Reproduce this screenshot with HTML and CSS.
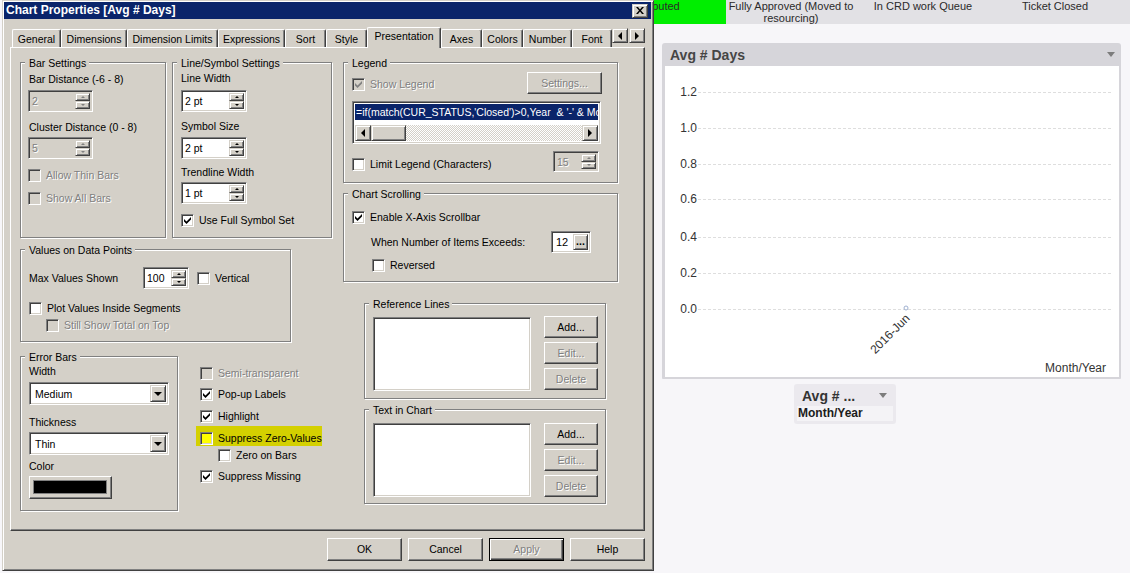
FILE: index.html
```html
<!DOCTYPE html>
<html lang="en">
<head>
    <meta charset="UTF-8">
    <meta name="viewport" content="width=device-width, initial-scale=1.0">
    <title>Chart Properties [Avg # Days]</title>
    <link rel="stylesheet" href="styles.css">
</head>
<body>
    <!-- sheet behind the dialog -->
    <div class="app">
        <div class="strip">
            <div class="strip-cell done">Disputed</div>
            <div class="strip-cell">Fully Approved (Moved to resourcing)</div>
            <div class="strip-cell">In CRD work Queue</div>
            <div class="strip-cell">Ticket Closed</div>
        </div>

        <div class="chart-box">
            <div class="chart-head"><span>Avg # Days</span><i class="menu-arrow"></i></div>
            <div class="chart-body">
                <svg class="plot" width="454" height="311" viewBox="0 0 454 311">
                    <g class="grid">
                        <line x1="33" y1="26.5" x2="446" y2="26.5"/>
                        <line x1="33" y1="62.5" x2="446" y2="62.5"/>
                        <line x1="33" y1="98.5" x2="446" y2="98.5"/>
                        <line x1="33" y1="133.5" x2="446" y2="133.5"/>
                        <line x1="33" y1="171.5" x2="446" y2="171.5"/>
                        <line x1="33" y1="207.5" x2="446" y2="207.5"/>
                        <line x1="33" y1="243.5" x2="446" y2="243.5"/>
                    </g>
                    <g class="ticks">
                        <text x="32" y="30">1.2</text>
                        <text x="32" y="66">1.0</text>
                        <text x="32" y="102">0.8</text>
                        <text x="32" y="137">0.6</text>
                        <text x="32" y="175">0.4</text>
                        <text x="32" y="211">0.2</text>
                        <text x="32" y="247">0.0</text>
                    </g>
                    <circle class="point" cx="241" cy="242" r="2"/>
                    <text class="dim-label" transform="translate(225 268) rotate(-45)" x="0" y="4">2016-Jun</text>
                    <text class="axis-title" x="441" y="306">Month/Year</text>
                </svg>
            </div>
        </div>

        <div class="mini-legend">
            <div class="mini-head"><span>Avg # ...</span><i class="menu-arrow"></i></div>
            <div class="mini-row">Month/Year</div>
        </div>
    </div>

    <!-- Chart Properties dialog -->
    <div class="dialog">
        <div class="titlebar">
            <span>Chart Properties [Avg # Days]</span>
            <span class="close raised">
                <svg width="8" height="7" viewBox="0 0 8 7"><path d="M0 0h2l2 2.4L6 0h2L5 3.5 8 7H6L4 4.6 2 7H0l3-3.5z"/></svg>
            </span>
        </div>

        <div class="dialog-body">
            <div class="tabs">
                <div class="tab t-general">General</div>
                <div class="tab t-dims">Dimensions</div>
                <div class="tab t-limits">Dimension Limits</div>
                <div class="tab t-expr">Expressions</div>
                <div class="tab t-sort">Sort</div>
                <div class="tab t-style">Style</div>
                <div class="tab active t-pres">Presentation</div>
                <div class="tab t-axes">Axes</div>
                <div class="tab t-colors">Colors</div>
                <div class="tab t-number">Number</div>
                <div class="tab t-font">Font</div>
                <div class="tab-arrows">
                    <span class="raised arrow-btn"><i class="tri-left"></i></span>
                    <span class="raised arrow-btn"><i class="tri-right"></i></span>
                </div>
            </div>

            <div class="panel">
                <div class="col-left">
                    <div class="row">
                        <div class="group bar-settings">
                            <div class="group-title">Bar Settings</div>
                            <div class="lbl mt3">Bar Distance (-6 - 8)</div>
                            <div class="spin field off w65 mt4 nudge">
                                <span class="spin-text">2</span>
                                <span class="spin-btns"><span class="raised"><i class="tri-up"></i></span><span class="raised"><i class="tri-down"></i></span></span>
                            </div>
                            <div class="lbl mt9">Cluster Distance (0 - 8)</div>
                            <div class="spin field off w65 mt3 nudge">
                                <span class="spin-text">5</span>
                                <span class="spin-btns"><span class="raised"><i class="tri-up"></i></span><span class="raised"><i class="tri-down"></i></span></span>
                            </div>
                            <div class="check off mt10 nudge"><span class="box"></span>Allow Thin Bars</div>
                            <div class="check off mt10 nudge"><span class="box"></span>Show All Bars</div>
                        </div>

                        <div class="group line-settings">
                            <div class="group-title">Line/Symbol Settings</div>
                            <div class="lbl mt2">Line Width</div>
                            <div class="spin field w66 mt5">
                                <span class="spin-text">2 pt</span>
                                <span class="spin-btns"><span class="raised"><i class="tri-up"></i></span><span class="raised"><i class="tri-down"></i></span></span>
                            </div>
                            <div class="lbl mt8">Symbol Size</div>
                            <div class="spin field w66 mt4">
                                <span class="spin-text">2 pt</span>
                                <span class="spin-btns"><span class="raised"><i class="tri-up"></i></span><span class="raised"><i class="tri-down"></i></span></span>
                            </div>
                            <div class="lbl mt7">Trendline Width</div>
                            <div class="spin field w66 mt3">
                                <span class="spin-text">1 pt</span>
                                <span class="spin-btns"><span class="raised"><i class="tri-up"></i></span><span class="raised"><i class="tri-down"></i></span></span>
                            </div>
                            <div class="check mt10"><span class="box"><svg viewBox="0 0 7 7"><path d="M0 2l2.5 2.5L7 0v2.5L2.5 7 0 4.5z"/></svg></span>Use Full Symbol Set</div>
                        </div>
                    </div>

                    <div class="group values-group">
                        <div class="group-title">Values on Data Points</div>
                        <div class="max-row">
                            <span class="max-label">Max Values Shown</span>
                            <div class="spin field w46">
                                <span class="spin-text">100</span>
                                <span class="spin-btns"><span class="raised"><i class="tri-up"></i></span><span class="raised"><i class="tri-down"></i></span></span>
                            </div>
                            <div class="check vertical"><span class="box"></span>Vertical</div>
                        </div>
                        <div class="check mt13"><span class="box"></span>Plot Values Inside Segments</div>
                        <div class="check off mt4 indent"><span class="box"></span>Still Show Total on Top</div>
                    </div>

                    <div class="row bottom-row">
                        <div class="group error-group">
                            <div class="group-title">Error Bars</div>
                            <div class="lbl mt1">Width</div>
                            <div class="combo field mt4">
                                <span class="combo-text">Medium</span>
                                <span class="combo-btn raised"><i class="tri-down big"></i></span>
                            </div>
                            <div class="lbl mt11">Thickness</div>
                            <div class="combo field mt3">
                                <span class="combo-text">Thin</span>
                                <span class="combo-btn raised"><i class="tri-down big"></i></span>
                            </div>
                            <div class="lbl mt5">Color</div>
                            <div class="color-btn btn mt3"><span class="swatch"></span></div>
                        </div>

                        <div class="check-col">
                            <div class="check off"><span class="box"></span>Semi-transparent</div>
                            <div class="check mt8"><span class="box"><svg viewBox="0 0 7 7"><path d="M0 2l2.5 2.5L7 0v2.5L2.5 7 0 4.5z"/></svg></span>Pop-up Labels</div>
                            <div class="check mt9"><span class="box"><svg viewBox="0 0 7 7"><path d="M0 2l2.5 2.5L7 0v2.5L2.5 7 0 4.5z"/></svg></span>Highlight</div>
                            <div class="check marked"><span class="box"></span>Suppress Zero-Values</div>
                            <div class="check mt4 sub"><span class="box"></span>Zero on Bars</div>
                            <div class="check mt8"><span class="box"><svg viewBox="0 0 7 7"><path d="M0 2l2.5 2.5L7 0v2.5L2.5 7 0 4.5z"/></svg></span>Suppress Missing</div>
                        </div>
                    </div>
                </div>

                <div class="col-right">
                    <div class="group legend-group">
                        <div class="group-title">Legend</div>
                        <div class="legend-top">
                            <div class="check off"><span class="box"><svg viewBox="0 0 7 7"><path d="M0 2l2.5 2.5L7 0v2.5L2.5 7 0 4.5z"/></svg></span>Show Legend</div>
                            <button class="btn off settings-btn">Settings...</button>
                        </div>
                        <div class="field legend-list">
                            <div class="list-sel">=if(match(CUR_STATUS,'Closed')&gt;0,Year  &amp; '-' &amp; Mo</div>
                            <div class="hscroll">
                                <span class="raised sb-btn"><i class="tri-left"></i></span>
                                <span class="raised sb-thumb"></span>
                                <span class="sb-track"></span>
                                <span class="raised sb-btn"><i class="tri-right"></i></span>
                            </div>
                        </div>
                        <div class="limit-row">
                            <div class="check"><span class="box"></span>Limit Legend (Characters)</div>
                            <div class="spin field off w46 limit-spin">
                                <span class="spin-text">15</span>
                                <span class="spin-btns"><span class="raised"><i class="tri-up"></i></span><span class="raised"><i class="tri-down"></i></span></span>
                            </div>
                        </div>
                    </div>

                    <div class="group scroll-group">
                        <div class="group-title">Chart Scrolling</div>
                        <div class="check mt10"><span class="box"><svg viewBox="0 0 7 7"><path d="M0 2l2.5 2.5L7 0v2.5L2.5 7 0 4.5z"/></svg></span>Enable X-Axis Scrollbar</div>
                        <div class="exceed-row">
                            <span>When Number of Items Exceeds:</span>
                            <div class="field num-field"><span class="num-text">12</span><span class="raised dots">...</span></div>
                        </div>
                        <div class="check mt6 reversed"><span class="box"></span>Reversed</div>
                    </div>

                    <div class="group side-group ref-group">
                        <div class="group-title">Reference Lines</div>
                        <div class="list-row">
                            <div class="field plain-list ref-list"></div>
                            <div class="side-btns">
                                <button class="btn">Add...</button>
                                <button class="btn off">Edit...</button>
                                <button class="btn off">Delete</button>
                            </div>
                        </div>
                    </div>

                    <div class="group side-group text-group">
                        <div class="group-title">Text in Chart</div>
                        <div class="list-row text-row">
                            <div class="field plain-list"></div>
                            <div class="side-btns">
                                <button class="btn">Add...</button>
                                <button class="btn off">Edit...</button>
                                <button class="btn off">Delete</button>
                            </div>
                        </div>
                    </div>
                </div>
            </div>

            <div class="dialog-buttons">
                <button class="btn">OK</button>
                <button class="btn">Cancel</button>
                <button class="btn off default">Apply</button>
                <button class="btn">Help</button>
            </div>
        </div>
    </div>
</body>
</html>
```

FILE: styles.css
```css
* {
    box-sizing: border-box;
}
body {
    margin: 0;
    width: 1130px;
    height: 573px;
    overflow: hidden;
    position: relative;
    background-color: #f7f6f9;
    font-family: "Liberation Sans", Arial, sans-serif;
}

/* ---------- sheet behind ---------- */
.app {
    padding-left: 590px;
}
.strip {
    display: grid;
    grid-template-columns: 136px 130px 134px 130px;
    height: 24px;
    background-color: #e2e1e5;
    font-size: 11px;
    line-height: 12px;
    color: #2a2a2a;
}
.strip-cell {
    text-align: center;
}
.strip-cell.done {
    background-color: #00ee00;
}
.chart-box {
    width: 459px;
    margin: 19px 0 0 72px;
    padding: 0 2px 2px 3px;
    background-color: #d6d5da;
    border-radius: 3px 3px 1px 1px;
}
.chart-head {
    height: 23px;
    display: flex;
    align-items: center;
    justify-content: space-between;
    padding: 0 4px 0 5px;
    font-size: 14px;
    font-weight: bold;
    color: #454545;
}
.menu-arrow {
    width: 0;
    height: 0;
    border-left: 4px solid transparent;
    border-right: 4px solid transparent;
    border-top: 5px solid #7c7c7c;
}
.chart-body {
    height: 311px;
    background-color: #fff;
}
.plot {
    display: block;
}
.grid line {
    stroke: #dedede;
    stroke-width: 1;
    stroke-dasharray: 3 2;
}
.ticks text {
    font-size: 12px;
    fill: #333;
    text-anchor: end;
}
.point {
    fill: #fff;
    stroke: #9fb0d0;
    stroke-width: 1;
}
.dim-label {
    font-size: 12px;
    fill: #333;
    text-anchor: middle;
}
.axis-title {
    font-size: 12px;
    fill: #333;
    text-anchor: end;
}
.mini-legend {
    width: 102px;
    height: 40px;
    margin: 5px 0 0 204px;
    padding: 3px 3px 0 3px;
    background-color: #ebe9ee;
    border-radius: 3px;
}
.mini-head {
    height: 19px;
    display: flex;
    align-items: center;
    justify-content: space-between;
    padding: 0 6px 2px 5px;
    font-size: 14px;
    font-weight: bold;
    color: #333;
}
.mini-row {
    height: 15px;
    line-height: 15px;
    padding-left: 1px;
    background-color: #f4f3f6;
    font-size: 12px;
    font-weight: bold;
    color: #1c1c1c;
}

/* ---------- dialog ---------- */
.dialog {
    position: absolute;
    left: 2px;
    top: 0;
    width: 652px;
    height: 571px;
    padding: 1px 2px 1px 1px;
    background-color: #d4d0c8;
    border: 1px solid;
    border-color: #d4d0c8 #404040 #404040 #d4d0c8;
    box-shadow: inset 1px 1px #fff, inset -1px -1px #808080;
    font-size: 10.5px;
    line-height: 13px;
    color: #000;
}
.titlebar {
    height: 17px;
    display: flex;
    align-items: center;
    justify-content: space-between;
    padding: 0 3px 0 2px;
    background-color: #0a246a;
    color: #fff;
    font-size: 12px;
    font-weight: bold;
}
.raised {
    background-color: #d4d0c8;
    border: 1px solid;
    border-color: #d4d0c8 #404040 #404040 #d4d0c8;
    box-shadow: inset 1px 1px #fff, inset -1px -1px #808080;
}
.close {
    width: 16px;
    height: 14px;
    display: flex;
    align-items: center;
    justify-content: center;
}
.close svg {
    display: block;
}
.dialog-body {
    padding: 8px 0 0 6px;
}

/* tabs */
.tabs {
    display: flex;
    align-items: flex-end;
    height: 20px;
    margin-left: 2px;
}
.tab {
    height: 18px;
    display: flex;
    align-items: center;
    justify-content: center;
    padding-top: 1px;
    border-left: 1px solid #fff;
    border-top: 1px solid #fff;
    border-right: 1px solid #404040;
    border-radius: 2px 2px 0 0;
    box-shadow: inset -1px 0 #808080;
    white-space: nowrap;
}
.tab.active {
    height: 21px;
    margin-bottom: -1px;
    padding: 0 0 3px;
    position: relative;
    z-index: 1;
    background-color: #d4d0c8;
}
.t-general { width: 49px; }
.t-dims { width: 66px; }
.t-limits { width: 91px; }
.t-expr { width: 67px; }
.t-sort { width: 41px; }
.t-style { width: 41px; }
.t-pres { width: 74px; }
.t-axes { width: 41px; }
.t-colors { width: 41px; }
.t-number { width: 49px; }
.t-font { width: 40px; }
.tab-arrows {
    align-self: flex-start;
    display: flex;
    gap: 1px;
    margin-top: 1px;
}
.arrow-btn {
    width: 16px;
    height: 15px;
    display: flex;
    align-items: center;
    justify-content: center;
}
.tri-left,
.tri-right {
    width: 0;
    height: 0;
    border-top: 4px solid transparent;
    border-bottom: 4px solid transparent;
}
.tri-left {
    border-right: 4px solid #000;
}
.tri-right {
    border-left: 4px solid #000;
}
.tri-up,
.tri-down {
    width: 0;
    height: 0;
    border-left: 2px solid transparent;
    border-right: 2px solid transparent;
}
.tri-up {
    border-bottom: 2px solid #000;
}
.tri-down {
    border-top: 2px solid #000;
}
.tri-down.big {
    border-left-width: 4px;
    border-right-width: 4px;
    border-top-width: 4px;
}

.panel {
    width: 635px;
    height: 484px;
    display: flex;
    gap: 11px;
    padding: 14px 0 0 9px;
    border-left: 1px solid #fff;
    border-top: 1px solid #fff;
    border-right: 1px solid #404040;
    border-bottom: 1px solid #404040;
    box-shadow: inset -1px -1px #808080;
}
.col-left {
    width: 312px;
}
.col-right {
    width: 275px;
}
.row {
    display: flex;
    gap: 6px;
}

/* group boxes */
.group {
    border: 1px solid #808080;
    box-shadow: inset 1px 1px #fff, 1px 1px #fff;
    padding-left: 8px;
}
.group-title {
    display: table;
    height: 13px;
    margin: -6px 0 0 -4px;
    padding: 0 3px 0 4px;
    background-color: #d4d0c8;
}
.bar-settings { width: 146px; height: 176px; }
.line-settings { width: 160px; height: 176px; }
.values-group { width: 271px; height: 93px; margin-top: 11px; }
.bottom-row { margin-top: 14px; gap: 0; }
.error-group { width: 158px; height: 155px; }
.legend-group { width: 275px; height: 121px; }
.scroll-group { width: 275px; height: 89px; margin-top: 10px; }
.side-group { width: 242px; margin-left: 21px; }
.ref-group { height: 96px; margin-top: 21px; }
.text-group { height: 95px; margin-top: 10px; }

.mt1 { margin-top: 1px; }
.mt2 { margin-top: 2px; }
.mt3 { margin-top: 3px; }
.mt4 { margin-top: 4px; }
.mt5 { margin-top: 5px; }
.mt6 { margin-top: 6px; }
.mt7 { margin-top: 7px; }
.mt8 { margin-top: 8px; }
.mt9 { margin-top: 9px; }
.mt10 { margin-top: 10px; }
.mt11 { margin-top: 11px; }
.mt13 { margin-top: 13px; }
.nudge { margin-left: -1px; }

.lbl {
    height: 13px;
    white-space: nowrap;
}
.off {
    color: #808080;
    text-shadow: 1px 1px 0 #fff;
}

/* sunken fields */
.field {
    background-color: #fff;
    border: 1px solid;
    border-color: #808080 #fff #fff #808080;
    box-shadow: inset 1px 1px #404040, inset -1px -1px #d4d0c8;
}
.spin {
    height: 22px;
    display: flex;
    padding: 2px;
}
.spin.off {
    background-color: #d4d0c8;
}
.spin-text {
    flex: 1;
    padding-left: 1px;
    line-height: 17px;
}
.spin-btns {
    width: 15px;
    display: flex;
    flex-direction: column;
}
.spin-btns .raised {
    flex: 1;
    display: flex;
    align-items: center;
    justify-content: center;
}
.spin.off .tri-up { border-bottom-color: #808080; }
.spin.off .tri-down { border-top-color: #808080; }
.w46 { width: 46px; }
.w65 { width: 65px; }
.w66 { width: 66px; }

.combo {
    width: 140px;
    height: 23px;
    display: flex;
    padding: 2px;
}
.combo-text {
    flex: 1;
    padding-left: 3px;
    line-height: 19px;
}
.combo-btn {
    width: 16px;
    display: flex;
    align-items: center;
    justify-content: center;
}

/* checkboxes */
.check {
    height: 13px;
    display: flex;
    align-items: center;
    gap: 5px;
    white-space: nowrap;
}
.box {
    width: 13px;
    height: 13px;
    flex: none;
    display: flex;
    align-items: center;
    justify-content: center;
    background-color: #fff;
    border: 1px solid;
    border-color: #808080 #fff #fff #808080;
    box-shadow: inset 1px 1px #404040, inset -1px -1px #d4d0c8;
}
.box svg {
    width: 7px;
    height: 7px;
    display: block;
    fill: #000;
}
.check.off .box {
    background-color: #d4d0c8;
}
.check.off .box svg {
    fill: #808080;
}

.max-row {
    height: 22px;
    display: flex;
    align-items: center;
    margin-top: 10px;
}
.max-label {
    width: 114px;
}
.vertical {
    margin-left: 8px;
}
.indent {
    margin-left: 17px;
}

.check-col {
    padding-top: 11px;
    margin-left: 22px;
}
.marked {
    width: fit-content;
    margin: 3px 0 -1px -4px;
    padding: 6px 0 1px 4px;
    height: 20px;
    align-items: flex-end;
    background-color: #d4d000;
}
.marked .box {
    background-color: #ffff00;
}
.sub {
    margin-left: 18px;
}

/* buttons */
.btn {
    height: 23px;
    width: 75px;
    display: flex;
    align-items: center;
    justify-content: center;
    padding: 0;
    font: inherit;
    color: #000;
    background-color: #d4d0c8;
    border: 1px solid;
    border-color: #fff #404040 #404040 #fff;
    box-shadow: inset -1px -1px #808080;
}
.btn.off {
    color: #808080;
}
.btn.default {
    border-color: #000;
    box-shadow: inset 1px 1px #fff, inset -1px -1px #404040, inset -2px -2px #808080;
}
.color-btn {
    width: 83px;
    padding: 3px 4px 4px 3px;
}
.swatch {
    display: block;
    width: 100%;
    height: 100%;
    background-color: #000;
    border: 1px solid #808080;
}

/* legend group */
.legend-top {
    height: 22px;
    display: flex;
    margin-top: 2px;
}
.legend-top .check {
    margin-top: 6px;
}
.settings-btn {
    height: 22px;
    margin-left: auto;
    margin-right: 15px;
}
.legend-list {
    width: 249px;
    height: 43px;
    margin-top: 7px;
    padding: 2px;
    display: flex;
    flex-direction: column;
}
.list-sel {
    height: 16px;
    line-height: 16px;
    padding-left: 1px;
    background-color: #0a246a;
    color: #fff;
    white-space: pre;
    overflow: hidden;
}
.hscroll {
    height: 16px;
    margin-top: auto;
    display: flex;
}
.sb-btn {
    width: 16px;
    display: flex;
    align-items: center;
    justify-content: center;
}
.sb-thumb {
    width: 35px;
}
.sb-track {
    flex: 1;
    background: repeating-conic-gradient(#fff 0 25%, #d4d0c8 0 50%) 0 0 / 2px 2px;
}
.limit-row {
    height: 21px;
    display: flex;
    margin-top: 7px;
}
.limit-row .check {
    margin-top: 7px;
}
.limit-spin {
    height: 21px;
    margin-left: auto;
    margin-right: 18px;
}

/* chart scrolling */
.exceed-row {
    height: 22px;
    display: flex;
    align-items: center;
    margin-top: 7px;
    padding-left: 19px;
}
.num-field {
    width: 40px;
    height: 22px;
    display: flex;
    padding: 2px;
    margin-left: auto;
    margin-right: 26px;
}
.num-text {
    flex: 1;
    padding-left: 2px;
    line-height: 17px;
    font-size: 11px;
}
.dots {
    width: 15px;
    text-align: center;
    font-weight: bold;
    line-height: 12px;
}
.reversed {
    margin-left: 20px;
}

/* reference lines / text in chart */
.list-row {
    display: flex;
    margin-top: 5px;
}
.text-row {
    margin-top: 6px;
}
.plain-list {
    width: 158px;
    height: 74px;
}
.ref-list {
    margin-top: 1px;
}
.side-btns {
    display: flex;
    flex-direction: column;
    gap: 4px;
    margin-left: 13px;
}
.side-btns .btn {
    width: 54px;
    height: 22px;
}

.dialog-buttons {
    width: 635px;
    display: flex;
    justify-content: flex-end;
    gap: 6px;
    margin-top: 7px;
}
```
